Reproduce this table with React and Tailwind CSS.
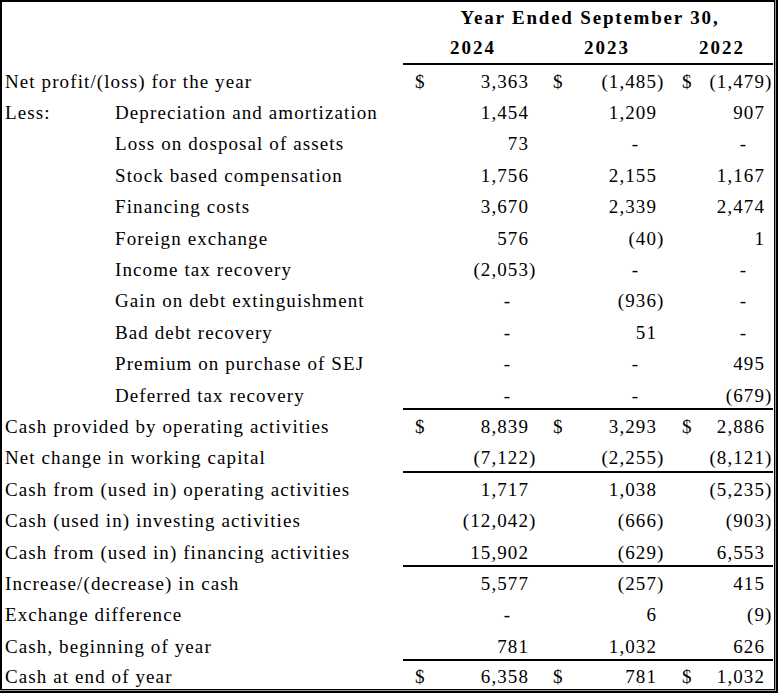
const rows = [
  { label: 'Net profit/(loss) for the year', dollar: true, v: ['3,363', '(1,485)', '(1,479)'], line: true },
  { prefix: 'Less:', label: 'Depreciation and amortization', v: ['1,454', '1,209', '907'] },
  { prefix: '', label: 'Loss on dosposal of assets', v: ['73', '-', '-'] },
  { prefix: '', label: 'Stock based compensation', v: ['1,756', '2,155', '1,167'] },
  { prefix: '', label: 'Financing costs', v: ['3,670', '2,339', '2,474'] },
  { prefix: '', label: 'Foreign exchange', v: ['576', '(40)', '1'] },
  { prefix: '', label: 'Income tax recovery', v: ['(2,053)', '-', '-'] },
  { prefix: '', label: 'Gain on debt extinguishment', v: ['-', '(936)', '-'] },
  { prefix: '', label: 'Bad debt recovery', v: ['-', '51', '-'] },
  { prefix: '', label: 'Premium on purchase of SEJ', v: ['-', '-', '495'] },
  { prefix: '', label: 'Deferred tax recovery', v: ['-', '-', '(679)'] },
  { label: 'Cash provided by operating activities', dollar: true, v: ['8,839', '3,293', '2,886'], line: true },
  { label: 'Net change in working capital', v: ['(7,122)', '(2,255)', '(8,121)'] },
  { label: 'Cash from (used in) operating activities', v: ['1,717', '1,038', '(5,235)'], line: true },
  { label: 'Cash (used in) investing activities', v: ['(12,042)', '(666)', '(903)'] },
  { label: 'Cash from (used in) financing activities', v: ['15,902', '(629)', '6,553'] },
  { label: 'Increase/(decrease) in cash', v: ['5,577', '(257)', '415'], line: true },
  { label: 'Exchange difference', v: ['-', '6', '(9)'] },
  { label: 'Cash, beginning of year', v: ['781', '1,032', '626'] },
  { label: 'Cash at end of year', dollar: true, v: ['6,358', '781', '1,032'], line: true, last: true },
];

// dollar column and number column classes per year
const cols = [
  { d: 'w-[37px] pl-[12px]', n: 'w-[103px] pr-[6.5px]' },
  { d: 'w-[35px] pl-[10px]', n: 'w-[93px] pr-[6.5px]' },
  { d: 'w-[29px] pl-[11px]', n: 'w-[73px] pr-[0.5px]' },
];

const Amount = ({ value }) => {
  if (value === '-') {
    return (
      <span className="pr-[18px]">
        -<span className="invisible">)</span>
      </span>
    );
  }
  const neg = value.startsWith('(');
  const body = neg ? value.slice(0, -1) : value;
  return (
    <span>
      {body}
      <span className={neg ? '' : 'invisible'}>)</span>
    </span>
  );
};

const App = () => {
  return (
    <div className="w-[778px] h-[693px] bg-white border-r-2 border-b-2 border-black">
      <div className="h-full border-r border-b border-[#9a9a9a]">
        <div
          className="h-full border-l-2 border-t-2 border-r border-b border-black text-black text-[19px] tracking-[1.1px] leading-none"
          style={{ fontFamily: '"Liberation Serif", "Times New Roman", serif' }}
        >
          {/* Header */}
          <div className="flex h-[30px] items-center">
            <div className="w-[401px]" />
            <div className="w-[370px] pl-[4px] text-center font-bold tracking-[1.8px]">Year Ended September 30,</div>
          </div>
          <div className="flex h-[31px] items-center font-bold tracking-[2px]">
            <div className="w-[401px]" />
            <div className="w-[140px] text-center">2024</div>
            <div className="w-[128px] text-center">2023</div>
            <div className="w-[102px] text-center">2022</div>
          </div>

          {/* Body */}
          {rows.map((r, i) => (
            <div key={i} className={`flex ${r.last ? 'h-[29.4px]' : 'h-[31.4px]'}`}>
              <div className="w-[401px] flex items-center pl-[3px] pt-[3px] border-t-2 border-transparent">
                {r.prefix !== undefined && <div className="w-[110px] shrink-0">{r.prefix}</div>}
                <div className="whitespace-nowrap">{r.label}</div>
              </div>
              <div className={`flex w-[370px] pt-[3px] border-t-2 ${r.line ? 'border-black' : 'border-transparent'}`}>
                {r.v.map((val, j) => (
                  <div key={j} className="flex">
                    <div className={`${cols[j].d} flex items-center`}>{r.dollar ? '$' : ''}</div>
                    <div className={`${cols[j].n} flex items-center justify-end whitespace-nowrap`}>
                      <Amount value={val} />
                    </div>
                  </div>
                ))}
              </div>
            </div>
          ))}
        </div>
      </div>
    </div>
  );
};

export default App;
